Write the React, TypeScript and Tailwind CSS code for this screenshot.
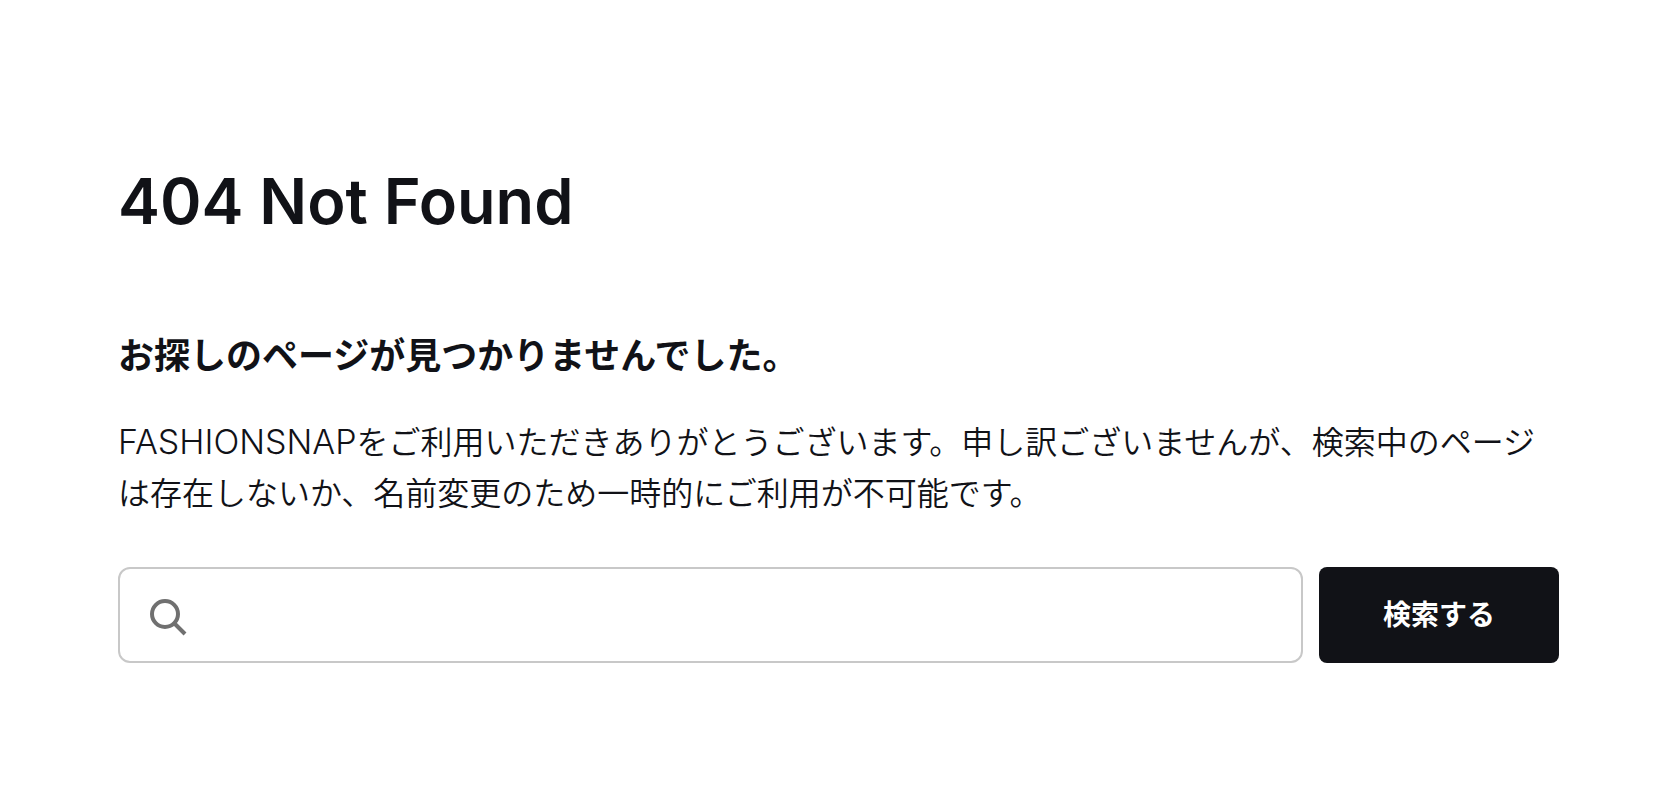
import React, { useState } from 'react';

const SearchForm: React.FC = () => {
  const [keyword, setKeyword] = useState<string>('');

  return (
    <form role="search" onSubmit={(e) => e.preventDefault()} className="flex gap-4">
      <label className="flex h-24 min-w-0 flex-1 items-center gap-6 rounded-xl border-2 border-[#c8c8c8] bg-white px-7">
        <svg className="size-11 shrink-0 text-[#707070]" viewBox="0 0 44 44" fill="none" stroke="currentColor" strokeWidth={4}>
          <circle cx="17" cy="21" r="13" />
          <path d="M26 30L37 41" />
        </svg>
        <input
          type="search"
          aria-label="検索キーワード"
          value={keyword}
          onChange={(e) => setKeyword(e.target.value)}
          className="h-full min-w-0 flex-1 bg-transparent text-[32px] outline-none"
        />
      </label>
      <button type="submit" className="w-60 rounded-lg bg-[#111217] text-[28px] font-bold text-white">
        検索する
      </button>
    </form>
  );
};

const App: React.FC = () => {
  return (
    <main className="bg-white pt-40 pr-[121px] pb-[140px] pl-[118px] font-['Inter','Noto_Sans_CJK_JP',sans-serif] text-[#111217]">
      <h1 className="mb-[82px] text-[63px] leading-[82px] font-semibold">404 Not Found</h1>
      <h2 className="mb-7 text-[36px] leading-[64px] font-bold">お探しのページが見つかりませんでした。</h2>
      <p className="mb-12 text-[32px] leading-[51px] font-[350]">
        <span className="text-[34px] font-light">FASHIONSNAP</span>
        をご利用いただきありがとうございます。申し訳ございませんが、検索中のページ
        <br />
        は存在しないか、名前変更のため一時的にご利用が不可能です。
      </p>
      <SearchForm />
    </main>
  );
};

export default App;
